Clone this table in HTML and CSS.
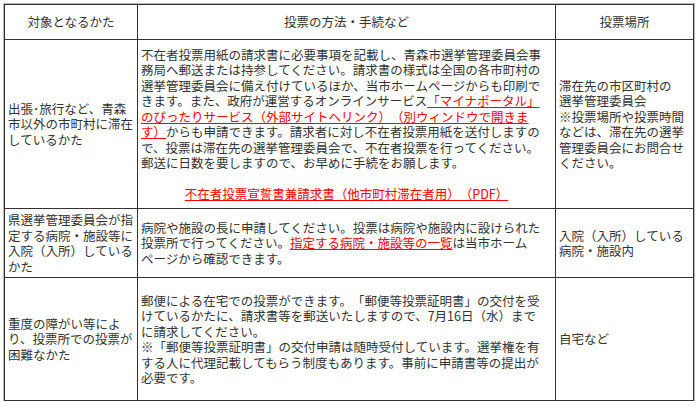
FILE: index.html
```html
<!DOCTYPE html>
<html lang="ja">
<head>
<meta charset="utf-8">
<title>投票の方法</title>
<link rel="stylesheet" href="styles.css">
</head>
<body>
<div class="page">
<table class="vote-table">
  <colgroup>
    <col class="col-who">
    <col class="col-how">
    <col class="col-where">
  </colgroup>
  <thead>
    <tr class="row-head">
      <th>対象となるかた</th>
      <th>投票の方法・手続など</th>
      <th>投票場所</th>
    </tr>
  </thead>
  <tbody>
    <tr class="row-travel">
      <td>出張･旅行など、青森市以外の市町村に滞在しているかた</td>
      <td>
        <p class="lines">不在者投票用紙の請求書に必要事項を記載し、青森市選挙管理委員会事<br>務局へ郵送または持参してください。請求書の様式は全国の各市町村の<br>選挙管理委員会に備え付けているほか、当市ホームページからも印刷で<br>きます。また、政府が運営するオンラインサービス<a href="#">「マイナポータル」<br>のぴったりサービス（外部サイトへリンク）（別ウィンドウで開きま<br>す）</a>からも申請できます。請求者に対し不在者投票用紙を送付しますの<br>で、投票は滞在先の選挙管理委員会で、不在者投票を行ってください。<br>郵送に日数を要しますので、お早めに手続をお願します。</p>
        <p class="center"><a href="#">不在者投票宣誓書兼請求書（他市町村滞在者用）（PDF）</a></p>
      </td>
      <td class="lines">滞在先の市区町村の<br>選挙管理委員会<br>※投票場所や投票時間<br>などは、滞在先の選挙<br>管理委員会にお問合せ<br>ください。</td>
    </tr>
    <tr class="row-hospital">
      <td>県選挙管理委員会が指定する病院・施設等に入院（入所）しているかた</td>
      <td class="lines">病院や施設の長に申請してください。投票は病院や施設内に設けられた<br>投票所で行ってください。<a href="#">指定する病院・施設等の一覧</a>は当市ホーム<br>ページから確認できます。</td>
      <td>入院（入所）している病院・施設内</td>
    </tr>
    <tr class="row-home">
      <td>重度の障がい等により、投票所での投票が困難なかた</td>
      <td class="lines">郵便による在宅での投票ができます。「郵便等投票証明書」の交付を受<br>けているかたに、請求書等を郵送いたしますので、7月16日（水）まで<br>に請求してください。<br>※「郵便等投票証明書」の交付申請は随時受付しています。選挙権を有<br>する人に代理記載してもらう制度もあります。事前に申請書等の提出が<br>必要です。</td>
      <td>自宅など</td>
    </tr>
  </tbody>
</table>
</div>
</body>
</html>
```

FILE: styles.css
```css
html, body {
  margin: 0;
  padding: 0;
  background: #ffffff;
}

.page {
  padding: 4px 0 0 4px;
}

.vote-table {
  width: 689px;
  table-layout: fixed;
  border-collapse: collapse;
  font-family: "Noto Sans CJK JP", "Noto Sans", sans-serif;
  font-size: 12.5px;
  line-height: 15.5px;
  color: #333333;
  text-spacing-trim: space-all;
  box-shadow: 0 0 0 1px #b8b8b8;
}

.col-who { width: 133px; }
.col-how { width: 418px; }
.col-where { width: 138px; }

.vote-table th,
.vote-table td {
  border: 1px solid #333333;
  padding: 3px;
  vertical-align: middle;
  text-align: left;
  word-break: break-all;
}

.vote-table th {
  font-weight: normal;
  text-align: center;
}

.vote-table .lines {
  white-space: nowrap;
}

.vote-table p {
  margin: 0;
}

.vote-table p.center {
  text-align: center;
  margin-top: 15.5px;
}

.vote-table a {
  color: #ff0000;
  text-decoration: underline;
}

.row-head { height: 35px; }
.row-travel { height: 169px; }
.row-hospital { height: 69px; }
.row-home { height: 123px; }
```
